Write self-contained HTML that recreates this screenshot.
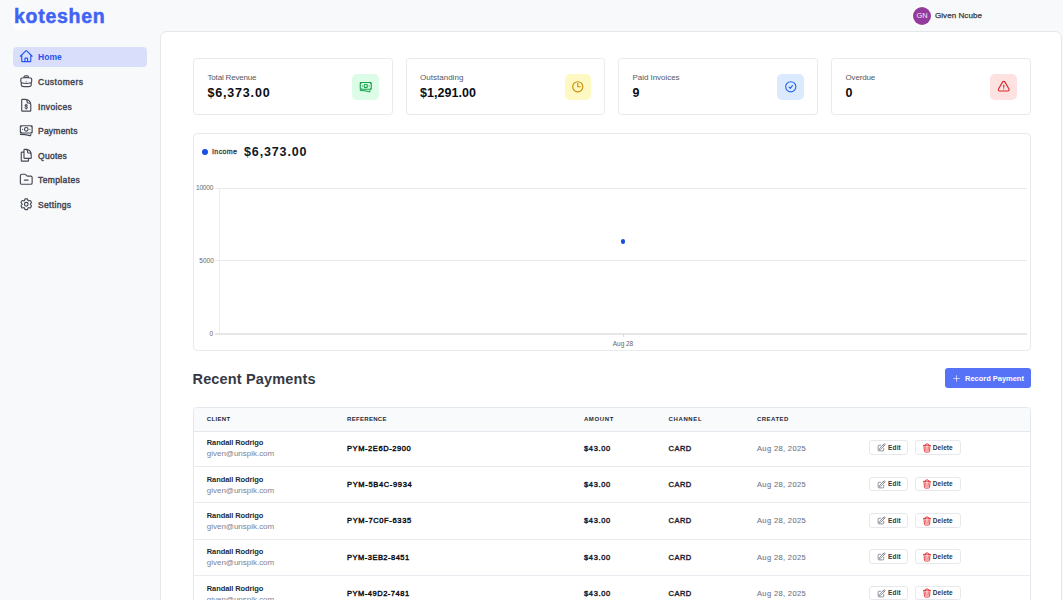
<!DOCTYPE html>
<html><head><meta charset="utf-8"><title>koteshen</title>
<style>
html,body{margin:0;padding:0;}
body{width:1063px;height:600px;overflow:hidden;position:relative;background:#f8f9fb;font-family:"Liberation Sans",sans-serif;}
.t{position:absolute;white-space:nowrap;}
.a{position:absolute;box-sizing:border-box;}
svg.a{overflow:visible;}
</style></head><body>
<div class="a" style="left:11px;top:8.5px;width:22px;height:22px;border-radius:50%;background:#ffffff;opacity:.85"></div>
<div class="a" style="left:13.3px;top:47px;width:133.7px;height:20px;border-radius:4px;background:#d9dffb"></div>
<svg class="a" style="left:18.55px;top:49.25px;width:14.5px;height:14.5px;color:#2553f0" viewBox="0 0 24 24" fill="none" stroke="currentColor" stroke-linecap="round" stroke-linejoin="round" stroke-width="1.9"><path d="m2.25 12 8.954-8.955c.44-.439 1.152-.439 1.591 0L21.75 12M4.5 9.75v10.125c0 .621.504 1.125 1.125 1.125H9.75v-4.875c0-.621.504-1.125 1.125-1.125h2.25c.621 0 1.125.504 1.125 1.125V21h4.125c.621 0 1.125-.504 1.125-1.125V9.75M8.25 21h8.25"/></svg>
<svg class="a" style="left:18.55px;top:73.82px;width:14.5px;height:14.5px;color:#454955" viewBox="0 0 24 24" fill="none" stroke="currentColor" stroke-linecap="round" stroke-linejoin="round" stroke-width="1.9"><path d="M20.25 14.15v4.25c0 1.094-.787 2.036-1.872 2.18-2.087.277-4.216.42-6.378.42s-4.291-.143-6.378-.42c-1.085-.144-1.872-1.086-1.872-2.18v-4.25m16.5 0a2.18 2.18 0 0 0 .75-1.661V8.706c0-1.081-.768-2.015-1.837-2.175a48.114 48.114 0 0 0-3.413-.387m4.5 8.006c-.194.165-.42.295-.673.38A23.978 23.978 0 0 1 12 15.750c-2.648 0-5.195-.429-7.577-1.22a2.016 2.016 0 0 1-.673-.38m0 0A2.18 2.18 0 0 1 3 12.489V8.706c0-1.081.768-2.015 1.837-2.175a48.111 48.111 0 0 1 3.413-.387m7.5 0V5.25A2.250 2.250 0 0 0 13.5 3h-3a2.250 2.250 0 0 0-2.25 2.25v.894m7.5 0a48.667 48.667 0 0 0-7.5 0M12 12.75h.008v.008H12v-.008Z"/></svg>
<svg class="a" style="left:18.55px;top:98.39px;width:14.5px;height:14.5px;color:#454955" viewBox="0 0 24 24" fill="none" stroke="currentColor" stroke-linecap="round" stroke-linejoin="round" stroke-width="1.9"><path d="M19.5 14.25v-2.625a3.375 3.375 0 0 0-3.375-3.375h-1.5A1.125 1.125 0 0 1 13.5 7.125v-1.5a3.375 3.375 0 0 0-3.375-3.375H8.25M10.5 2.25H5.625c-.621 0-1.125.504-1.125 1.125v17.25c0 .621.504 1.125 1.125 1.125h12.75c.621 0 1.125-.504 1.125-1.125V11.25a9 9 0 0 0-9-9Z"/><path d="M13.6 12.2c-.4-.6-1-.9-1.7-.9-1 0-1.8.6-1.8 1.4 0 1.8 3.7 1.1 3.7 3 0 .8-.8 1.4-1.9 1.4-.8 0-1.5-.4-1.8-1M11.9 10.3v.9m0 6v.9"/></svg>
<svg class="a" style="left:18.55px;top:122.96px;width:14.5px;height:14.5px;color:#454955" viewBox="0 0 24 24" fill="none" stroke="currentColor" stroke-linecap="round" stroke-linejoin="round" stroke-width="1.9"><path d="M2.25 18.75a60.07 60.07 0 0 1 15.797 2.101c.727.198 1.453-.342 1.453-1.096V18.75M3.75 4.5v.75A.75.75 0 0 1 3 6h-.75m0 0v-.375c0-.621.504-1.125 1.125-1.125H20.25M2.25 6v9m18-10.5v.75c0 .414.336.75.75.75h.75m-1.5-1.5h.375c.621 0 1.125.504 1.125 1.125v9.75c0 .621-.504 1.125-1.125 1.125h-.375m1.5-1.5H21a.75.75 0 0 0-.75.75v.75m0 0H3.75m0 0h-.375a1.125 1.125 0 0 1-1.125-1.125V15m1.5 1.5v-.75A.75.75 0 0 0 3 15h-.75M15 10.5a3 3 0 1 1-6 0 3 3 0 0 1 6 0Zm3 0h.008v.008H18V10.5Zm-12 0h.008v.008H6V10.5Z"/></svg>
<svg class="a" style="left:18.55px;top:147.53px;width:14.5px;height:14.5px;color:#454955" viewBox="0 0 24 24" fill="none" stroke="currentColor" stroke-linecap="round" stroke-linejoin="round" stroke-width="1.9"><path d="M15.75 17.25v3.375c0 .621-.504 1.125-1.125 1.125h-9.75a1.125 1.125 0 0 1-1.125-1.125V7.875c0-.621.504-1.125 1.125-1.125H6.75a9.06 9.06 0 0 1 1.5.124m7.5 10.376h3.375c.621 0 1.125-.504 1.125-1.125V11.25c0-4.46-3.243-8.161-7.5-8.876a9.06 9.06 0 0 0-1.5-.124H9.375c-.621 0-1.125.504-1.125 1.125v3.5m7.5 10.375H9.375a1.125 1.125 0 0 1-1.125-1.125v-9.25m12 6.625v-1.875a3.375 3.375 0 0 0-3.375-3.375h-1.5a1.125 1.125 0 0 1-1.125-1.125v-1.5a3.375 3.375 0 0 0-3.375-3.375H9.75"/></svg>
<svg class="a" style="left:18.55px;top:172.10px;width:14.5px;height:14.5px;color:#454955" viewBox="0 0 24 24" fill="none" stroke="currentColor" stroke-linecap="round" stroke-linejoin="round" stroke-width="1.9"><path d="M15 13.5H9m4.06-7.19-2.12-2.12a1.5 1.5 0 0 0-1.061-.44H4.5A2.25 2.25 0 0 0 2.25 6v12a2.25 2.25 0 0 0 2.25 2.25h15A2.25 2.25 0 0 0 21.75 18V9a2.25 2.25 0 0 0-2.25-2.25h-5.379a1.5 1.5 0 0 1-1.06-.44Z"/></svg>
<svg class="a" style="left:18.55px;top:196.67px;width:14.5px;height:14.5px;color:#454955" viewBox="0 0 24 24" fill="none" stroke="currentColor" stroke-linecap="round" stroke-linejoin="round" stroke-width="1.9"><path d="M9.594 3.94c.09-.542.56-.94 1.11-.94h2.593c.55 0 1.02.398 1.11.94l.213 1.281c.063.374.313.686.645.87.074.04.147.083.22.127.325.196.72.257 1.075.124l1.217-.456a1.125 1.125 0 0 1 1.37.49l1.296 2.247a1.125 1.125 0 0 1-.26 1.431l-1.003.827c-.293.241-.438.613-.43.992a7.723 7.723 0 0 1 0 .255c-.008.378.137.75.43.991l1.004.827c.424.35.534.955.26 1.43l-1.298 2.247a1.125 1.125 0 0 1-1.369.491l-1.217-.456c-.355-.133-.75-.072-1.076.124a6.47 6.47 0 0 1-.22.128c-.331.183-.581.495-.644.869l-.213 1.281c-.09.543-.56.94-1.11.94h-2.594c-.55 0-1.019-.398-1.11-.94l-.213-1.281c-.062-.374-.312-.686-.644-.87a6.52 6.52 0 0 1-.22-.127c-.325-.196-.72-.257-1.076-.124l-1.217.456a1.125 1.125 0 0 1-1.369-.49l-1.297-2.247a1.125 1.125 0 0 1 .26-1.431l1.004-.827c.292-.24.437-.613.43-.991a6.932 6.932 0 0 1 0-.255c.007-.38-.138-.751-.43-.992l-1.004-.827a1.125 1.125 0 0 1-.26-1.43l1.297-2.247a1.125 1.125 0 0 1 1.37-.491l1.216.456c.356.133.751.072 1.076-.124.072-.044.146-.086.22-.128.332-.183.582-.495.644-.869l.214-1.28Z"/><path d="M15 12a3 3 0 1 1-6 0 3 3 0 0 1 6 0Z"/></svg>
<div class="a" style="left:913px;top:6.5px;width:18px;height:18px;border-radius:50%;background:#933b9c;box-shadow:0 0 0 1.2px #fff"></div>
<div class="a" style="left:160px;top:31px;width:902px;height:620px;border:1px solid #e5e7eb;border-radius:7px;background:#fff"></div>
<div class="a" style="left:193px;top:58px;width:199.5px;height:57px;border:1px solid #e9eaed;border-radius:3.5px;background:#fff"></div>
<div class="a" style="left:352px;top:73.5px;width:26.5px;height:26.5px;border-radius:5px;background:#dcfce7"></div>
<svg class="a" style="left:358.55px;top:80.05px;width:13.5px;height:13.5px;color:#16a34a" viewBox="0 0 24 24" fill="none" stroke="currentColor" stroke-linecap="round" stroke-linejoin="round" stroke-width="2"><path d="M2.25 18.75a60.07 60.07 0 0 1 15.797 2.101c.727.198 1.453-.342 1.453-1.096V18.75M3.75 4.5v.75A.75.75 0 0 1 3 6h-.75m0 0v-.375c0-.621.504-1.125 1.125-1.125H20.25M2.25 6v9m18-10.5v.75c0 .414.336.75.75.75h.75m-1.5-1.5h.375c.621 0 1.125.504 1.125 1.125v9.75c0 .621-.504 1.125-1.125 1.125h-.375m1.5-1.5H21a.75.75 0 0 0-.75.75v.75m0 0H3.75m0 0h-.375a1.125 1.125 0 0 1-1.125-1.125V15m1.5 1.5v-.75A.75.75 0 0 0 3 15h-.75M15 10.5a3 3 0 1 1-6 0 3 3 0 0 1 6 0Zm3 0h.008v.008H18V10.5Zm-12 0h.008v.008H6V10.5Z"/></svg>
<div class="a" style="left:405.5px;top:58px;width:199.5px;height:57px;border:1px solid #e9eaed;border-radius:3.5px;background:#fff"></div>
<div class="a" style="left:564.5px;top:73.5px;width:26.5px;height:26.5px;border-radius:5px;background:#fef9c3"></div>
<svg class="a" style="left:571.05px;top:80.05px;width:13.5px;height:13.5px;color:#ca8a04" viewBox="0 0 24 24" fill="none" stroke="currentColor" stroke-linecap="round" stroke-linejoin="round" stroke-width="2"><path d="M12 6v6h4.5m4.5 0a9 9 0 1 1-18 0 9 9 0 0 1 18 0Z"/></svg>
<div class="a" style="left:618px;top:58px;width:199.5px;height:57px;border:1px solid #e9eaed;border-radius:3.5px;background:#fff"></div>
<div class="a" style="left:777px;top:73.5px;width:26.5px;height:26.5px;border-radius:5px;background:#dbeafe"></div>
<svg class="a" style="left:783.55px;top:80.05px;width:13.5px;height:13.5px;color:#2563eb" viewBox="0 0 24 24" fill="none" stroke="currentColor" stroke-linecap="round" stroke-linejoin="round" stroke-width="2"><path d="M9 12.75 11.25 15 15 9.75M21 12a9 9 0 1 1-18 0 9 9 0 0 1 18 0Z"/></svg>
<div class="a" style="left:831px;top:58px;width:199.5px;height:57px;border:1px solid #e9eaed;border-radius:3.5px;background:#fff"></div>
<div class="a" style="left:990px;top:73.5px;width:26.5px;height:26.5px;border-radius:5px;background:#fee2e2"></div>
<svg class="a" style="left:996.55px;top:80.05px;width:13.5px;height:13.5px;color:#dc2626" viewBox="0 0 24 24" fill="none" stroke="currentColor" stroke-linecap="round" stroke-linejoin="round" stroke-width="2"><path d="M12 9v3.75m-9.303 3.376c-.866 1.5.217 3.374 1.948 3.374h14.71c1.73 0 2.813-1.874 1.948-3.374L13.949 3.378c-.866-1.5-3.032-1.5-3.898 0L2.697 16.126ZM12 15.75h.007v.008H12v-.008Z"/></svg>
<div class="a" style="left:193px;top:133px;width:837.5px;height:217.5px;border:1px solid #e9eaed;border-radius:4px;background:#fff"></div>
<div class="a" style="left:202px;top:149px;width:6px;height:6px;border-radius:50%;background:#1a4fe6"></div>
<div class="a" style="left:215px;top:187.9px;width:812px;height:1px;background:#e8e8e8"></div>
<div class="a" style="left:215px;top:260.3px;width:812px;height:1px;background:#e8e8e8"></div>
<div class="a" style="left:215px;top:333px;width:812px;height:1.5px;background:#e6e6e6"></div>
<div class="a" style="left:219px;top:188px;width:1px;height:146px;background:#ededed"></div>
<div class="a" style="left:622.5px;top:334px;width:1px;height:3px;background:#dcdcdc"></div>
<div class="a" style="left:620.7px;top:239px;width:4.5px;height:4.5px;border-radius:50%;background:#1a4fd8"></div>
<div class="a" style="left:945px;top:368.3px;width:85.5px;height:19.6px;border-radius:3px;background:#5672f6"></div>
<svg class="a" style="left:951.60px;top:374.00px;width:9px;height:9px;color:#e8ecff" viewBox="0 0 24 24" fill="none" stroke="currentColor" stroke-linecap="round" stroke-linejoin="round" stroke-width="2"><path d="M12 4.5v15m7.5-7.5h-15"/></svg>
<div class="a" style="left:193px;top:407px;width:837.5px;height:260px;border:1px solid #e3e7ee;border-radius:4px;background:#fff;overflow:hidden"><div style="height:23px;background:#f8fafc;border-bottom:1px solid #e3e7ee"></div></div>
<div class="a" style="left:194px;top:466.1px;width:835.5px;height:1px;background:#e8ebf0"></div>
<div class="a" style="left:194px;top:502.4px;width:835.5px;height:1px;background:#e8ebf0"></div>
<div class="a" style="left:194px;top:538.7px;width:835.5px;height:1px;background:#e8ebf0"></div>
<div class="a" style="left:194px;top:575.0px;width:835.5px;height:1px;background:#e8ebf0"></div>
<div class="a" style="left:869.3px;top:440.4px;width:38.5px;height:14.5px;border:1px solid #e6e8ec;border-radius:3px;background:#fff"></div>
<div class="a" style="left:914.8px;top:440.4px;width:46px;height:14.5px;border:1px solid #e6e8ec;border-radius:3px;background:#fff"></div>
<svg class="a" style="left:876.70px;top:443.30px;width:9px;height:9px;color:#6b7280" viewBox="0 0 24 24" fill="none" stroke="currentColor" stroke-linecap="round" stroke-linejoin="round" stroke-width="2"><path d="m16.862 4.487 1.687-1.688a1.875 1.875 0 1 1 2.652 2.652L10.582 16.07a4.5 4.5 0 0 1-1.897 1.13L6 18l.8-2.685a4.5 4.5 0 0 1 1.13-1.897l8.932-8.931Zm0 0L19.5 7.125M18 14v4.75A2.25 2.25 0 0 1 15.75 21H5.25A2.25 2.25 0 0 1 3 18.75V8.25A2.25 2.25 0 0 1 5.25 6H10"/></svg>
<svg class="a" style="left:921.70px;top:443.00px;width:10px;height:10px;color:#e5343a" viewBox="0 0 24 24" fill="none" stroke="currentColor" stroke-linecap="round" stroke-linejoin="round" stroke-width="2.3"><path d="m14.74 9-.346 9m-4.788 0L9.26 9m9.968-3.21c.342.052.682.107 1.022.166m-1.022-.165L18.16 19.673a2.25 2.25 0 0 1-2.244 2.077H8.084a2.25 2.25 0 0 1-2.244-2.077L4.772 5.79m14.456 0a48.108 48.108 0 0 0-3.478-.397m-12 .562c.34-.059.68-.114 1.022-.165m0 0a48.11 48.11 0 0 1 3.478-.397m7.5 0v-.916c0-1.18-.91-2.164-2.09-2.201a51.964 51.964 0 0 0-3.32 0c-1.18.037-2.09 1.022-2.09 2.201v.916m7.5 0a48.667 48.667 0 0 0-7.5 0"/></svg>
<div class="a" style="left:869.3px;top:476.7px;width:38.5px;height:14.5px;border:1px solid #e6e8ec;border-radius:3px;background:#fff"></div>
<div class="a" style="left:914.8px;top:476.7px;width:46px;height:14.5px;border:1px solid #e6e8ec;border-radius:3px;background:#fff"></div>
<svg class="a" style="left:876.70px;top:479.60px;width:9px;height:9px;color:#6b7280" viewBox="0 0 24 24" fill="none" stroke="currentColor" stroke-linecap="round" stroke-linejoin="round" stroke-width="2"><path d="m16.862 4.487 1.687-1.688a1.875 1.875 0 1 1 2.652 2.652L10.582 16.07a4.5 4.5 0 0 1-1.897 1.13L6 18l.8-2.685a4.5 4.5 0 0 1 1.13-1.897l8.932-8.931Zm0 0L19.5 7.125M18 14v4.75A2.25 2.25 0 0 1 15.75 21H5.25A2.25 2.25 0 0 1 3 18.75V8.25A2.25 2.25 0 0 1 5.25 6H10"/></svg>
<svg class="a" style="left:921.70px;top:479.30px;width:10px;height:10px;color:#e5343a" viewBox="0 0 24 24" fill="none" stroke="currentColor" stroke-linecap="round" stroke-linejoin="round" stroke-width="2.3"><path d="m14.74 9-.346 9m-4.788 0L9.26 9m9.968-3.21c.342.052.682.107 1.022.166m-1.022-.165L18.16 19.673a2.25 2.25 0 0 1-2.244 2.077H8.084a2.25 2.25 0 0 1-2.244-2.077L4.772 5.79m14.456 0a48.108 48.108 0 0 0-3.478-.397m-12 .562c.34-.059.68-.114 1.022-.165m0 0a48.11 48.11 0 0 1 3.478-.397m7.5 0v-.916c0-1.18-.91-2.164-2.09-2.201a51.964 51.964 0 0 0-3.32 0c-1.18.037-2.09 1.022-2.09 2.201v.916m7.5 0a48.667 48.667 0 0 0-7.5 0"/></svg>
<div class="a" style="left:869.3px;top:513.0px;width:38.5px;height:14.5px;border:1px solid #e6e8ec;border-radius:3px;background:#fff"></div>
<div class="a" style="left:914.8px;top:513.0px;width:46px;height:14.5px;border:1px solid #e6e8ec;border-radius:3px;background:#fff"></div>
<svg class="a" style="left:876.70px;top:515.90px;width:9px;height:9px;color:#6b7280" viewBox="0 0 24 24" fill="none" stroke="currentColor" stroke-linecap="round" stroke-linejoin="round" stroke-width="2"><path d="m16.862 4.487 1.687-1.688a1.875 1.875 0 1 1 2.652 2.652L10.582 16.07a4.5 4.5 0 0 1-1.897 1.13L6 18l.8-2.685a4.5 4.5 0 0 1 1.13-1.897l8.932-8.931Zm0 0L19.5 7.125M18 14v4.75A2.25 2.25 0 0 1 15.75 21H5.25A2.25 2.25 0 0 1 3 18.75V8.25A2.25 2.25 0 0 1 5.25 6H10"/></svg>
<svg class="a" style="left:921.70px;top:515.60px;width:10px;height:10px;color:#e5343a" viewBox="0 0 24 24" fill="none" stroke="currentColor" stroke-linecap="round" stroke-linejoin="round" stroke-width="2.3"><path d="m14.74 9-.346 9m-4.788 0L9.26 9m9.968-3.21c.342.052.682.107 1.022.166m-1.022-.165L18.16 19.673a2.25 2.25 0 0 1-2.244 2.077H8.084a2.25 2.25 0 0 1-2.244-2.077L4.772 5.79m14.456 0a48.108 48.108 0 0 0-3.478-.397m-12 .562c.34-.059.68-.114 1.022-.165m0 0a48.11 48.11 0 0 1 3.478-.397m7.5 0v-.916c0-1.18-.91-2.164-2.09-2.201a51.964 51.964 0 0 0-3.32 0c-1.18.037-2.09 1.022-2.09 2.201v.916m7.5 0a48.667 48.667 0 0 0-7.5 0"/></svg>
<div class="a" style="left:869.3px;top:549.3px;width:38.5px;height:14.5px;border:1px solid #e6e8ec;border-radius:3px;background:#fff"></div>
<div class="a" style="left:914.8px;top:549.3px;width:46px;height:14.5px;border:1px solid #e6e8ec;border-radius:3px;background:#fff"></div>
<svg class="a" style="left:876.70px;top:552.20px;width:9px;height:9px;color:#6b7280" viewBox="0 0 24 24" fill="none" stroke="currentColor" stroke-linecap="round" stroke-linejoin="round" stroke-width="2"><path d="m16.862 4.487 1.687-1.688a1.875 1.875 0 1 1 2.652 2.652L10.582 16.07a4.5 4.5 0 0 1-1.897 1.13L6 18l.8-2.685a4.5 4.5 0 0 1 1.13-1.897l8.932-8.931Zm0 0L19.5 7.125M18 14v4.75A2.25 2.25 0 0 1 15.75 21H5.25A2.25 2.25 0 0 1 3 18.75V8.25A2.25 2.25 0 0 1 5.25 6H10"/></svg>
<svg class="a" style="left:921.70px;top:551.90px;width:10px;height:10px;color:#e5343a" viewBox="0 0 24 24" fill="none" stroke="currentColor" stroke-linecap="round" stroke-linejoin="round" stroke-width="2.3"><path d="m14.74 9-.346 9m-4.788 0L9.26 9m9.968-3.21c.342.052.682.107 1.022.166m-1.022-.165L18.16 19.673a2.25 2.25 0 0 1-2.244 2.077H8.084a2.25 2.25 0 0 1-2.244-2.077L4.772 5.79m14.456 0a48.108 48.108 0 0 0-3.478-.397m-12 .562c.34-.059.68-.114 1.022-.165m0 0a48.11 48.11 0 0 1 3.478-.397m7.5 0v-.916c0-1.18-.91-2.164-2.09-2.201a51.964 51.964 0 0 0-3.32 0c-1.18.037-2.09 1.022-2.09 2.201v.916m7.5 0a48.667 48.667 0 0 0-7.5 0"/></svg>
<div class="a" style="left:869.3px;top:585.6px;width:38.5px;height:14.5px;border:1px solid #e6e8ec;border-radius:3px;background:#fff"></div>
<div class="a" style="left:914.8px;top:585.6px;width:46px;height:14.5px;border:1px solid #e6e8ec;border-radius:3px;background:#fff"></div>
<svg class="a" style="left:876.70px;top:588.50px;width:9px;height:9px;color:#6b7280" viewBox="0 0 24 24" fill="none" stroke="currentColor" stroke-linecap="round" stroke-linejoin="round" stroke-width="2"><path d="m16.862 4.487 1.687-1.688a1.875 1.875 0 1 1 2.652 2.652L10.582 16.07a4.5 4.5 0 0 1-1.897 1.13L6 18l.8-2.685a4.5 4.5 0 0 1 1.13-1.897l8.932-8.931Zm0 0L19.5 7.125M18 14v4.75A2.25 2.25 0 0 1 15.75 21H5.25A2.25 2.25 0 0 1 3 18.75V8.25A2.25 2.25 0 0 1 5.25 6H10"/></svg>
<svg class="a" style="left:921.70px;top:588.20px;width:10px;height:10px;color:#e5343a" viewBox="0 0 24 24" fill="none" stroke="currentColor" stroke-linecap="round" stroke-linejoin="round" stroke-width="2.3"><path d="m14.74 9-.346 9m-4.788 0L9.26 9m9.968-3.21c.342.052.682.107 1.022.166m-1.022-.165L18.16 19.673a2.25 2.25 0 0 1-2.244 2.077H8.084a2.25 2.25 0 0 1-2.244-2.077L4.772 5.79m14.456 0a48.108 48.108 0 0 0-3.478-.397m-12 .562c.34-.059.68-.114 1.022-.165m0 0a48.11 48.11 0 0 1 3.478-.397m7.5 0v-.916c0-1.18-.91-2.164-2.09-2.201a51.964 51.964 0 0 0-3.32 0c-1.18.037-2.09 1.022-2.09 2.201v.916m7.5 0a48.667 48.667 0 0 0-7.5 0"/></svg>
<div class=t style="left:14.00px;top:6.71px;font-size:19.5px;line-height:19.5px;font-weight:700;color:#3f63f4;letter-spacing:0.729px;-webkit-text-stroke:0.5px #3f63f4;">koteshen</div>
<div class=t style="left:38.00px;top:53.15px;font-size:8.5px;line-height:8.5px;font-weight:700;color:#2553f0;letter-spacing:0.033px;">Home</div>
<div class=t style="left:38.00px;top:77.54px;font-size:8.5px;line-height:8.5px;font-weight:400;color:#404452;letter-spacing:0.488px;-webkit-text-stroke:0.4px #404452;">Customers</div>
<div class=t style="left:38.00px;top:102.54px;font-size:8.5px;line-height:8.5px;font-weight:400;color:#404452;letter-spacing:0.371px;-webkit-text-stroke:0.4px #404452;">Invoices</div>
<div class=t style="left:38.00px;top:126.94px;font-size:8.5px;line-height:8.5px;font-weight:400;color:#404452;letter-spacing:0.229px;-webkit-text-stroke:0.4px #404452;">Payments</div>
<div class=t style="left:38.00px;top:151.54px;font-size:8.5px;line-height:8.5px;font-weight:400;color:#404452;letter-spacing:0.280px;-webkit-text-stroke:0.4px #404452;">Quotes</div>
<div class=t style="left:38.00px;top:175.94px;font-size:8.5px;line-height:8.5px;font-weight:400;color:#404452;letter-spacing:0.375px;-webkit-text-stroke:0.4px #404452;">Templates</div>
<div class=t style="left:38.00px;top:200.54px;font-size:8.5px;line-height:8.5px;font-weight:400;color:#404452;letter-spacing:0.343px;-webkit-text-stroke:0.4px #404452;">Settings</div>
<div class=t style="left:916.40px;top:12.28px;font-size:7.5px;line-height:7.5px;font-weight:400;color:#f3e6f5;letter-spacing:0.000px;">GN</div>
<div class=t style="left:935.00px;top:11.86px;font-size:8px;line-height:8px;font-weight:400;color:#353941;letter-spacing:0.060px;-webkit-text-stroke:0.25px #353941;">Given Ncube</div>
<div class=t style="left:207.50px;top:74.16px;font-size:8px;line-height:8px;font-weight:400;color:#545865;letter-spacing:-0.175px;">Total Revenue</div>
<div class=t style="left:207.50px;top:86.62px;font-size:12.5px;line-height:12.5px;font-weight:700;color:#0b0d12;letter-spacing:0.812px;">$6,373.00</div>
<div class=t style="left:420.00px;top:74.16px;font-size:8px;line-height:8px;font-weight:400;color:#545865;letter-spacing:0.020px;">Outstanding</div>
<div class=t style="left:420.00px;top:86.62px;font-size:12.5px;line-height:12.5px;font-weight:700;color:#0b0d12;letter-spacing:0.038px;">$1,291.00</div>
<div class=t style="left:632.50px;top:74.16px;font-size:8px;line-height:8px;font-weight:400;color:#545865;letter-spacing:-0.042px;">Paid Invoices</div>
<div class=t style="left:632.50px;top:86.62px;font-size:12.5px;line-height:12.5px;font-weight:700;color:#0b0d12;letter-spacing:0.000px;">9</div>
<div class=t style="left:845.50px;top:74.16px;font-size:8px;line-height:8px;font-weight:400;color:#545865;letter-spacing:-0.150px;">Overdue</div>
<div class=t style="left:845.50px;top:86.62px;font-size:12.5px;line-height:12.5px;font-weight:700;color:#0b0d12;letter-spacing:0.000px;">0</div>
<div class=t style="left:212.00px;top:148.39px;font-size:7px;line-height:7px;font-weight:400;color:#3a3f4e;letter-spacing:0.400px;-webkit-text-stroke:0.3px #3a3f4e;">Income</div>
<div class=t style="left:244.00px;top:145.62px;font-size:12.5px;line-height:12.5px;font-weight:700;color:#101828;letter-spacing:0.862px;">$6,373.00</div>
<div class=t style="left:195.90px;top:184.60px;font-size:6.5px;line-height:6.5px;font-weight:400;color:#666;letter-spacing:-0.125px;">10000</div>
<div class=t style="left:199.30px;top:257.91px;font-size:6.5px;line-height:6.5px;font-weight:400;color:#666;letter-spacing:0.033px;">5000</div>
<div class=t style="left:209.60px;top:330.61px;font-size:6.5px;line-height:6.5px;font-weight:400;color:#666;letter-spacing:0.000px;">0</div>
<div class=t style="left:612.80px;top:340.61px;font-size:6.5px;line-height:6.5px;font-weight:400;color:#666;letter-spacing:-0.060px;">Aug 28</div>
<div class=t style="left:192.50px;top:371.66px;font-size:14.5px;line-height:14.5px;font-weight:700;color:#363945;letter-spacing:0.164px;">Recent Payments</div>
<div class=t style="left:965.00px;top:374.77px;font-size:7.5px;line-height:7.5px;font-weight:700;color:#ffffff;letter-spacing:-0.023px;">Record Payment</div>
<div class=t style="left:206.80px;top:416.22px;font-size:6.0px;line-height:6.0px;font-weight:700;color:#1f2937;letter-spacing:0.340px;">CLIENT</div>
<div class=t style="left:347.00px;top:416.22px;font-size:6.0px;line-height:6.0px;font-weight:700;color:#1f2937;letter-spacing:0.312px;">REFERENCE</div>
<div class=t style="left:583.90px;top:416.22px;font-size:6.0px;line-height:6.0px;font-weight:700;color:#1f2937;letter-spacing:0.620px;">AMOUNT</div>
<div class=t style="left:668.50px;top:416.22px;font-size:6.0px;line-height:6.0px;font-weight:700;color:#1f2937;letter-spacing:0.633px;">CHANNEL</div>
<div class=t style="left:757.00px;top:416.22px;font-size:6.0px;line-height:6.0px;font-weight:700;color:#1f2937;letter-spacing:0.467px;">CREATED</div>
<div class=t style="left:206.80px;top:439.47px;font-size:7.5px;line-height:7.5px;font-weight:700;color:#252a36;letter-spacing:-0.093px;">Randall Rodrigo</div>
<div class=t style="left:206.80px;top:450.36px;font-size:8px;line-height:8px;font-weight:400;color:#7c8292;letter-spacing:-0.020px;">given@unspik.com</div>
<div class=t style="left:347.00px;top:444.77px;font-size:7.5px;line-height:7.5px;font-weight:400;color:#0b0d12;letter-spacing:0.583px;-webkit-text-stroke:0.4px #0b0d12;">PYM-2E6D-2900</div>
<div class=t style="left:584.00px;top:444.77px;font-size:7.5px;line-height:7.5px;font-weight:400;color:#1b2130;letter-spacing:0.660px;-webkit-text-stroke:0.4px #1b2130;">$43.00</div>
<div class=t style="left:668.50px;top:444.77px;font-size:7.5px;line-height:7.5px;font-weight:400;color:#1b2130;letter-spacing:0.500px;-webkit-text-stroke:0.4px #1b2130;">CARD</div>
<div class=t style="left:757.00px;top:444.77px;font-size:7.5px;line-height:7.5px;font-weight:400;color:#707686;letter-spacing:0.364px;-webkit-text-stroke:0.1px #707686;">Aug 28, 2025</div>
<div class=t style="left:888.00px;top:445.00px;font-size:6.5px;line-height:6.5px;font-weight:700;color:#30384a;letter-spacing:0.167px;">Edit</div>
<div class=t style="left:932.80px;top:445.00px;font-size:6.5px;line-height:6.5px;font-weight:700;color:#30384a;letter-spacing:0.080px;">Delete</div>
<div class=t style="left:206.80px;top:475.77px;font-size:7.5px;line-height:7.5px;font-weight:700;color:#252a36;letter-spacing:-0.093px;">Randall Rodrigo</div>
<div class=t style="left:206.80px;top:486.66px;font-size:8px;line-height:8px;font-weight:400;color:#7c8292;letter-spacing:-0.020px;">given@unspik.com</div>
<div class=t style="left:347.00px;top:481.07px;font-size:7.5px;line-height:7.5px;font-weight:400;color:#0b0d12;letter-spacing:0.667px;-webkit-text-stroke:0.4px #0b0d12;">PYM-5B4C-9934</div>
<div class=t style="left:584.00px;top:481.07px;font-size:7.5px;line-height:7.5px;font-weight:400;color:#1b2130;letter-spacing:0.660px;-webkit-text-stroke:0.4px #1b2130;">$43.00</div>
<div class=t style="left:668.50px;top:481.07px;font-size:7.5px;line-height:7.5px;font-weight:400;color:#1b2130;letter-spacing:0.500px;-webkit-text-stroke:0.4px #1b2130;">CARD</div>
<div class=t style="left:757.00px;top:481.07px;font-size:7.5px;line-height:7.5px;font-weight:400;color:#707686;letter-spacing:0.364px;-webkit-text-stroke:0.1px #707686;">Aug 28, 2025</div>
<div class=t style="left:888.00px;top:481.31px;font-size:6.5px;line-height:6.5px;font-weight:700;color:#30384a;letter-spacing:0.167px;">Edit</div>
<div class=t style="left:932.80px;top:481.31px;font-size:6.5px;line-height:6.5px;font-weight:700;color:#30384a;letter-spacing:0.080px;">Delete</div>
<div class=t style="left:206.80px;top:512.07px;font-size:7.5px;line-height:7.5px;font-weight:700;color:#252a36;letter-spacing:-0.093px;">Randall Rodrigo</div>
<div class=t style="left:206.80px;top:522.96px;font-size:8px;line-height:8px;font-weight:400;color:#7c8292;letter-spacing:-0.020px;">given@unspik.com</div>
<div class=t style="left:347.00px;top:517.38px;font-size:7.5px;line-height:7.5px;font-weight:400;color:#0b0d12;letter-spacing:0.658px;-webkit-text-stroke:0.4px #0b0d12;">PYM-7C0F-6335</div>
<div class=t style="left:584.00px;top:517.38px;font-size:7.5px;line-height:7.5px;font-weight:400;color:#1b2130;letter-spacing:0.660px;-webkit-text-stroke:0.4px #1b2130;">$43.00</div>
<div class=t style="left:668.50px;top:517.38px;font-size:7.5px;line-height:7.5px;font-weight:400;color:#1b2130;letter-spacing:0.500px;-webkit-text-stroke:0.4px #1b2130;">CARD</div>
<div class=t style="left:757.00px;top:517.38px;font-size:7.5px;line-height:7.5px;font-weight:400;color:#707686;letter-spacing:0.364px;-webkit-text-stroke:0.1px #707686;">Aug 28, 2025</div>
<div class=t style="left:888.00px;top:517.61px;font-size:6.5px;line-height:6.5px;font-weight:700;color:#30384a;letter-spacing:0.167px;">Edit</div>
<div class=t style="left:932.80px;top:517.61px;font-size:6.5px;line-height:6.5px;font-weight:700;color:#30384a;letter-spacing:0.080px;">Delete</div>
<div class=t style="left:206.80px;top:548.38px;font-size:7.5px;line-height:7.5px;font-weight:700;color:#252a36;letter-spacing:-0.093px;">Randall Rodrigo</div>
<div class=t style="left:206.80px;top:559.26px;font-size:8px;line-height:8px;font-weight:400;color:#7c8292;letter-spacing:-0.020px;">given@unspik.com</div>
<div class=t style="left:347.00px;top:553.67px;font-size:7.5px;line-height:7.5px;font-weight:400;color:#0b0d12;letter-spacing:0.492px;-webkit-text-stroke:0.4px #0b0d12;">PYM-3EB2-8451</div>
<div class=t style="left:584.00px;top:553.67px;font-size:7.5px;line-height:7.5px;font-weight:400;color:#1b2130;letter-spacing:0.660px;-webkit-text-stroke:0.4px #1b2130;">$43.00</div>
<div class=t style="left:668.50px;top:553.67px;font-size:7.5px;line-height:7.5px;font-weight:400;color:#1b2130;letter-spacing:0.500px;-webkit-text-stroke:0.4px #1b2130;">CARD</div>
<div class=t style="left:757.00px;top:553.67px;font-size:7.5px;line-height:7.5px;font-weight:400;color:#707686;letter-spacing:0.364px;-webkit-text-stroke:0.1px #707686;">Aug 28, 2025</div>
<div class=t style="left:888.00px;top:553.90px;font-size:6.5px;line-height:6.5px;font-weight:700;color:#30384a;letter-spacing:0.167px;">Edit</div>
<div class=t style="left:932.80px;top:553.90px;font-size:6.5px;line-height:6.5px;font-weight:700;color:#30384a;letter-spacing:0.080px;">Delete</div>
<div class=t style="left:206.80px;top:584.67px;font-size:7.5px;line-height:7.5px;font-weight:700;color:#252a36;letter-spacing:-0.093px;">Randall Rodrigo</div>
<div class=t style="left:206.80px;top:595.56px;font-size:8px;line-height:8px;font-weight:400;color:#7c8292;letter-spacing:-0.020px;">given@unspik.com</div>
<div class=t style="left:347.00px;top:589.98px;font-size:7.5px;line-height:7.5px;font-weight:400;color:#0b0d12;letter-spacing:0.517px;-webkit-text-stroke:0.4px #0b0d12;">PYM-49D2-7481</div>
<div class=t style="left:584.00px;top:589.98px;font-size:7.5px;line-height:7.5px;font-weight:400;color:#1b2130;letter-spacing:0.660px;-webkit-text-stroke:0.4px #1b2130;">$43.00</div>
<div class=t style="left:668.50px;top:589.98px;font-size:7.5px;line-height:7.5px;font-weight:400;color:#1b2130;letter-spacing:0.500px;-webkit-text-stroke:0.4px #1b2130;">CARD</div>
<div class=t style="left:757.00px;top:589.98px;font-size:7.5px;line-height:7.5px;font-weight:400;color:#707686;letter-spacing:0.364px;-webkit-text-stroke:0.1px #707686;">Aug 28, 2025</div>
<div class=t style="left:888.00px;top:590.20px;font-size:6.5px;line-height:6.5px;font-weight:700;color:#30384a;letter-spacing:0.167px;">Edit</div>
<div class=t style="left:932.80px;top:590.20px;font-size:6.5px;line-height:6.5px;font-weight:700;color:#30384a;letter-spacing:0.080px;">Delete</div>
</body></html>
